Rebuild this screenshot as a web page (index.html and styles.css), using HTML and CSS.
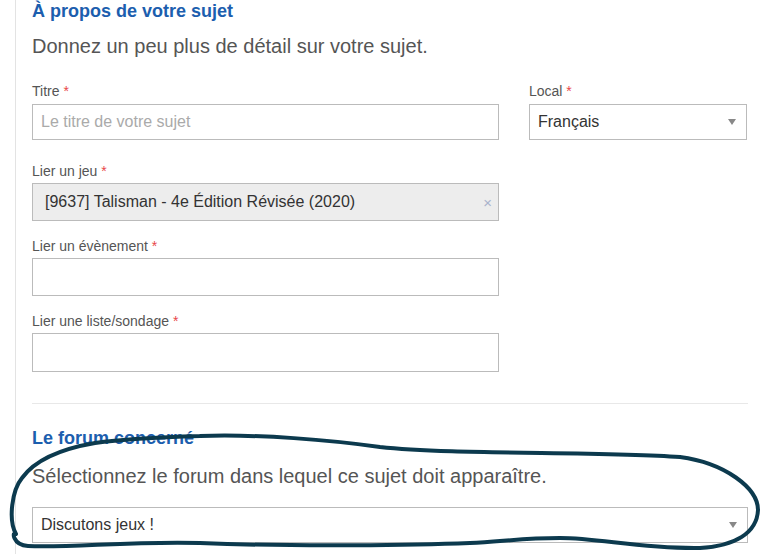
FILE: index.html
```html
<!DOCTYPE html>
<html lang="fr">
<head>
    <meta charset="UTF-8">
    <meta name="viewport" content="width=device-width, initial-scale=1.0">
    <title>Nouveau sujet</title>
    <link rel="stylesheet" href="styles.css">
</head>
<body>
    <div class="page">
        <!-- A propos -->
        <section class="block">
            <h2 class="block-title">À propos de votre sujet</h2>
            <p class="block-lead">Donnez un peu plus de détail sur votre sujet.</p>

            <div class="row">
                <div class="field">
                    <label for="title">Titre <span class="req">*</span></label>
                    <input type="text" id="title" class="input" placeholder="Le titre de votre sujet">
                </div>
                <div class="field">
                    <label>Local <span class="req">*</span></label>
                    <div class="select"><span>Français</span><span class="caret"></span></div>
                </div>
            </div>

            <div class="field field-game">
                <label>Lier un jeu <span class="req">*</span></label>
                <div class="select2"><span>[9637] Talisman - 4e Édition Révisée (2020)</span><span class="clear">×</span></div>
            </div>

            <div class="field field-link">
                <label>Lier un évènement <span class="req">*</span></label>
                <div class="select2 empty"></div>
            </div>

            <div class="field field-link">
                <label>Lier une liste/sondage <span class="req">*</span></label>
                <div class="select2 empty tall"></div>
            </div>
        </section>

        <hr class="divider">

        <!-- Forum -->
        <section class="block forum">
            <h2 class="block-title">Le forum concerné</h2>
            <p class="block-lead">Sélectionnez le forum dans lequel ce sujet doit apparaître.</p>
            <div class="select wide"><span>Discutons jeux !</span><span class="caret"></span></div>
        </section>
    </div>

    <!-- hand drawn annotation -->
    <svg class="scribble" width="760" height="554" viewBox="0 0 760 554">
        <path d="M200 436 C260 434 330 440 380 447 C450 455 600 451 680 457 C725 463 758 488 758 510 C757 533 735 546 700 548 C640 549 600 538 560 538 C520 538 500 542 470 543 C420 545 300 547 200 543 C130 541 70 548 28 546 C12 545 12 530 16 534 C8 520 12 490 22 478 C35 460 60 449 95 443 C130 438 165 437 200 436"/>
    </svg>
</body>
</html>
```

FILE: styles.css
```css
:root {
    --blue: #1c5eae;
    --text: #333;
    --muted: #555;
    --border: #bbb;
    --req: #e8474a;
}

body {
    margin: 0;
    font-family: "Liberation Sans", Arial, sans-serif;
    color: var(--text);
    background: #fff;
    overflow: hidden;
}

.page {
    margin-left: 15px;
    border-left: 1px solid #e3e3e3;
    padding-left: 16px;
    width: 716px;
    min-height: 554px;
}

.block-title {
    margin: 0;
    font-size: 18px;
    line-height: 22px;
    font-weight: bold;
    color: var(--blue);
}

.block-lead {
    margin: 12px 0 0;
    font-size: 20px;
    line-height: 24px;
    color: var(--muted);
}

.row {
    display: grid;
    grid-template-columns: 467px 218px;
    gap: 30px;
    margin-top: 25px;
}

.field label {
    display: block;
    font-size: 14px;
    line-height: 16px;
    color: var(--muted);
    margin-bottom: 5px;
}

.req {
    color: var(--req);
}

.field-game {
    margin-top: 23px;
    width: 467px;
}

.field-game label {
    margin-bottom: 4px;
}

.field-link {
    margin-top: 17px;
    width: 467px;
}

.field-link label {
    margin-bottom: 4px;
}

.input, .select, .select2 {
    box-sizing: border-box;
    width: 100%;
    height: 36px;
    border: 1px solid var(--border);
    background: #fff;
    font-family: inherit;
    font-size: 16px;
    color: var(--text);
    display: flex;
    align-items: center;
}

.input {
    padding: 0 8px;
    outline: none;
}

.input::placeholder {
    color: #aaa;
}

.select {
    padding: 0 8px;
    justify-content: space-between;
}

.caret {
    width: 0;
    height: 0;
    border-left: 4px solid transparent;
    border-right: 4px solid transparent;
    border-top: 6px solid #888;
    margin-right: 2px;
}

.select2 {
    height: 38px;
    padding: 0 6px 0 12px;
    background: #ededed;
    justify-content: space-between;
}

.select2.empty {
    background: #fff;
}

.select2.tall {
    height: 39px;
}

.clear {
    color: #a9b3cc;
    font-size: 15px;
}

.divider {
    border: 0;
    border-top: 1px solid #e8e8e8;
    margin: 31px 0 0;
    width: 716px;
}

.forum {
    padding-top: 23px;
}

.forum .block-lead {
    margin-top: 15px;
}

.select.wide {
    margin-top: 19px;
}

.scribble {
    position: absolute;
    top: 0;
    left: 0;
    pointer-events: none;
}

.scribble path {
    fill: none;
    stroke: #0c3a4e;
    stroke-width: 4;
    stroke-linecap: round;
    stroke-linejoin: round;
}
```
